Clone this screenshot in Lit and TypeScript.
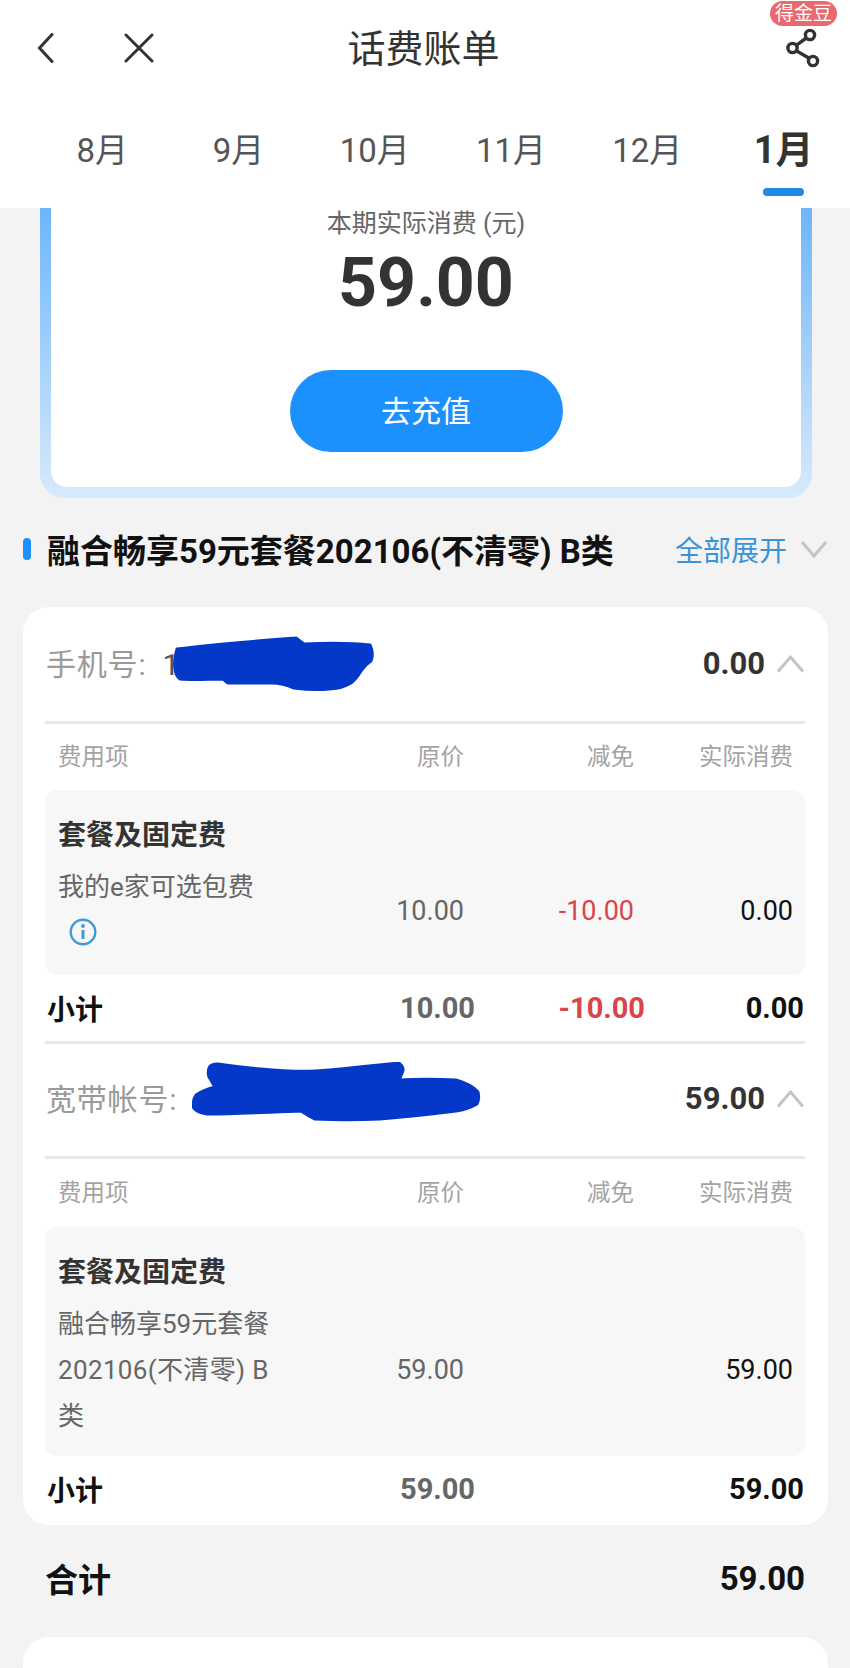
import { LitElement, html, css } from "lit";
import { customElement } from "lit/decorators.js";

const chevUp = html`<svg class="chev" width="29" height="19" viewBox="0 0 29 19"><path d="M2 17.5 14.5 3 27 17.5" fill="none" stroke="#c4c4c4" stroke-width="3"/></svg>`;

@customElement("app-root")
export class AppRoot extends LitElement {
  static styles = css`
    :host { display: block; width: 850px; height: 1668px; overflow: hidden; background: #f3f3f3;
      font-family: Roboto, "Noto Sans CJK SC", sans-serif; color: #333; }
    * { box-sizing: border-box; }
    .head { height: 208px; background: #fff; position: relative; overflow: hidden; }
    .top { height: 96px; display: grid; grid-template-columns: 1fr auto 1fr; align-items: center; padding: 0 30px 0 37px; position: relative; }
    .left { display: flex; align-items: center; gap: 70px; }
    .right { display: flex; justify-content: flex-end; }
    .top h1 { margin: 0 10px 6px 0; font-size: 38px; font-weight: 400; color: #333; }
    .badge { position: absolute; right: 13px; top: 1px; width: 67px; height: 25px; border-radius: 13px; background: #e9696e; color: #fff; font-size: 19px; line-height: 25px; text-align: center; }
    .tabs { display: grid; grid-template-columns: repeat(6, 136.3px); padding-left: 34px; margin-top: 32px; }
    .tab { display: flex; flex-direction: column; align-items: center; }
    .tab span { height: 44px; line-height: 46px; font-size: 33px; color: #555; }
    .tab.on span { font-size: 38px; line-height: 44px; font-weight: 700; color: #333; }
    .tab i { display: block; width: 41px; height: 8px; margin-top: 16px; border-radius: 4px; background: transparent; }
    .tab.on i { background: #1f88e5; }
    .bill { margin: 0 38px 0 40px; height: 290px; padding: 0 11px 11px; border-radius: 0 0 24px 24px;
      background: linear-gradient(#6db6fb, #d8eafc); }
    .bill-in { height: 279px; background: #fff; border-radius: 0 0 16px 16px; display: flex; flex-direction: column; align-items: center; }
    .bill-t { font-size: 25px; color: #666; height: 32px; line-height: 32px; }
    .bill-v { font-size: 68px; font-weight: 700; color: #333; height: 84px; line-height: 84px; margin-top: 1px; }
    .btn { width: 273px; height: 82px; margin-top: 45px; padding-bottom: 4px; border-radius: 41px; background: #1c90fd; color: #fff; font-size: 30px; display: flex; align-items: center; justify-content: center; }
    .sec { display: flex; align-items: center; height: 60px; margin-top: 21px; padding: 0 22px 0 23px; }
    .sec b { display: block; width: 8px; height: 22px; border-radius: 4px; background: #1c90fd; margin-right: 16px; }
    .sec strong { flex: 1; font-size: 33px; font-weight: 700; color: #111; white-space: nowrap; }
    .sec em { font-style: normal; font-size: 28px; color: #3a93d6; margin-right: 13px; }
    .card { margin: 28px 22px 0 23px; background: #fff; border-radius: 26px; padding: 2px 23px 0 22px; }
    .acct { height: 115px; display: flex; align-items: center; justify-content: space-between; border-bottom: 3px solid #e8e8e8; position: relative; padding-bottom: 4px; }
    .acct .lbl { font-size: 30px; letter-spacing: 0.8px; color: #9a9a9a; padding-left: 1px; margin-top: -3px; }
    .acct .lbl span { margin-left: 16px; color: #555; }
    .acct .amt { display: flex; align-items: center; gap: 11px; font-size: 31px; font-weight: 700; color: #333; }
    .blot { position: absolute; }
    .cols { display: grid; grid-template-columns: 217px 189px 170px 159px; padding: 0 12px 0 13px; }
    .cols > div { text-align: right; }
    .cols > div:first-child { text-align: left; }
    .hd { height: 66px; padding-bottom: 4px; align-items: center; font-size: 23.5px; color: #a3a3a3; }
    .hd.wide { height: 68px; }
    .box { background: #f7f7f7; border-radius: 12px; padding: 30px 0 17px; }
    .box h3 { margin: 0 13px 12px; font-size: 28px; line-height: 32px; font-weight: 700; color: #333; }
    .box .cols { align-items: center; font-size: 26px; line-height: 46px; color: #666; }
    .box .cols .num { letter-spacing: 0.35px; }
    .box .cols > div:not(:first-child) { font-size: 27px; }
    .red { color: #d9454a; }
    .blk { color: #111; }
    .info { display: block; margin: 8px 0 12px 11px; }
    .sub { display: grid; grid-template-columns: 290px 138px 170px 159px; height: 64px; align-items: center; font-size: 29px; font-weight: 700; color: #111; padding-left: 2px; }
    .sub > div { text-align: right; }
    .sub > div:first-child { text-align: left; font-size: 28px; }
    .sub .g { color: #666; }
    .sub .red { color: #d9454a; }
    .sub.line { border-bottom: 3px solid #e8e8e8; height: 69px; }
    .sub.last { height: 69px; padding-bottom: 4px; }
    .total { display: flex; justify-content: space-between; align-items: center; height: 112px; padding: 0 45px 6px 45px; font-size: 33px; font-weight: 700; color: #111; }
    .next { margin: 0 22px 0 23px; height: 80px; background: #fff; border-radius: 26px 26px 0 0; }
  `;

  private blot(d: string, left: number, top: number, w: number, h: number) {
    return html`<svg class="blot" style="left:${left}px;top:${top}px" width=${w} height=${h} viewBox="0 0 ${w} ${h}"><path d=${d} fill="#0438c9" stroke="#0438c9" stroke-width="3" stroke-linejoin="round"/></svg>`;
  }

  private row(name: unknown, a: string, b: string, c: string) {
    return html`<div class="cols"><div>${name}</div><div>${a}</div><div class="red">${b}</div><div class="blk">${c}</div></div>`;
  }

  render() {
    return html`
      <div class="head">
        <div class="top">
          <div class="left">
            <svg width="17" height="30" viewBox="0 0 17 30"><path d="M15 1.5 2.5 15 15 28.5" fill="none" stroke="#333" stroke-width="3" stroke-linecap="round"/></svg>
            <svg width="30" height="30" viewBox="0 0 30 30"><path d="M2 2 28 28M28 2 2 28" fill="none" stroke="#333" stroke-width="3" stroke-linecap="round"/></svg>
          </div>
          <h1>话费账单</h1>
          <div class="right">
            <svg width="34" height="40" viewBox="0 0 34 40"><g fill="none" stroke="#333" stroke-width="3.4"><circle cx="24" cy="7" r="4.6"/><circle cx="6.5" cy="20" r="4.6"/><circle cx="27" cy="33" r="4.6"/><path d="M20.3 10 10.2 17.3M10.3 22.7 23.2 30.3"/></g></svg>
          </div>
          <div class="badge">得金豆</div>
        </div>
        <div class="tabs">
          ${["8月", "9月", "10月", "11月", "12月", "1月"].map((m, i) => html`<div class="tab ${i === 5 ? "on" : ""}"><span>${m}</span><i></i></div>`)}
        </div>
      </div>
      <div class="bill">
        <div class="bill-in">
          <div class="bill-t">本期实际消费 (元)</div>
          <div class="bill-v">59.00</div>
          <div class="btn">去充值</div>
        </div>
      </div>
      <div class="sec">
        <b></b><strong>融合畅享59元套餐202106(不清零) B类</strong><em>全部展开</em>
        <svg width="28" height="18" viewBox="0 0 28 18"><path d="M2 2 14 16 26 2" fill="none" stroke="#c4c4c4" stroke-width="3"/></svg>
      </div>
      <div class="card">
        <div class="acct">
          <span class="lbl">手机号:<span>1</span></span>
          ${this.blot("M5 13C45 8 85 5 124 2L132 8C155 7 180 7 198 9 201 15 201 20 199 25 194 28 192 31 189 35 186 40 183 44 179 47 172 51 165 53 157 53 145 54 130 53 122 52 115 49 108 47 100 47 85 47 70 47 56 47L51 43C37 43 22 44 8 43 2 39 1 25 5 13Z", 127, 27, 204, 56)}
          <span class="amt">0.00 ${chevUp}</span>
        </div>
        <div class="cols hd"><div>费用项</div><div>原价</div><div>减免</div><div>实际消费</div></div>
        <div class="box">
          <h3>套餐及固定费</h3>
          ${this.row(html`我的e家可选包费<svg class="info" width="28" height="28" viewBox="0 0 28 28"><circle cx="14" cy="14" r="12.3" fill="none" stroke="#3f9ad8" stroke-width="2.4"/><circle cx="14" cy="8" r="1.9" fill="#3f9ad8"/><path d="M14 12V21" stroke="#3f9ad8" stroke-width="3"/></svg>`, "10.00", "-10.00", "0.00")}
        </div>
        <div class="sub line"><div>小计</div><div class="g">10.00</div><div class="red">-10.00</div><div>0.00</div></div>
        <div class="acct">
          <span class="lbl">宽带帐号:<span>c</span></span>
          ${this.blot("M17 6C18 3 22 2 26 2 40 4 55 6 69 7 90 9 106 10 123 9 145 8 165 5 177 4L207 1C211 4 212 8 210 11 209 14 208 16 207 18 225 17 245 17 264 18 274 21 282 25 286 30 287 34 287 38 285 42 278 46 272 48 264 49 240 52 214 55 188 57 165 58 145 58 123 57 116 54 112 51 109 49 78 50 46 52 15 52 7 51 3 48 1 45 1 40 2 36 4 33 10 29 16 27 23 25 21 22 19 18 17 15 16 12 16 9 17 6Z", 147, 18, 290, 60)}
          <span class="amt">59.00 ${chevUp}</span>
        </div>
        <div class="cols hd wide"><div>费用项</div><div>原价</div><div>减免</div><div>实际消费</div></div>
        <div class="box">
          <h3>套餐及固定费</h3>
          ${this.row(html`<div>融合畅享59元套餐</div><div class="num">202106(不清零) B</div><div>类</div>`, "59.00", "", "59.00")}
        </div>
        <div class="sub last"><div>小计</div><div class="g">59.00</div><div></div><div>59.00</div></div>
      </div>
      <div class="total"><span>合计</span><span>59.00</span></div>
      <div class="next"></div>
    `;
  }
}
